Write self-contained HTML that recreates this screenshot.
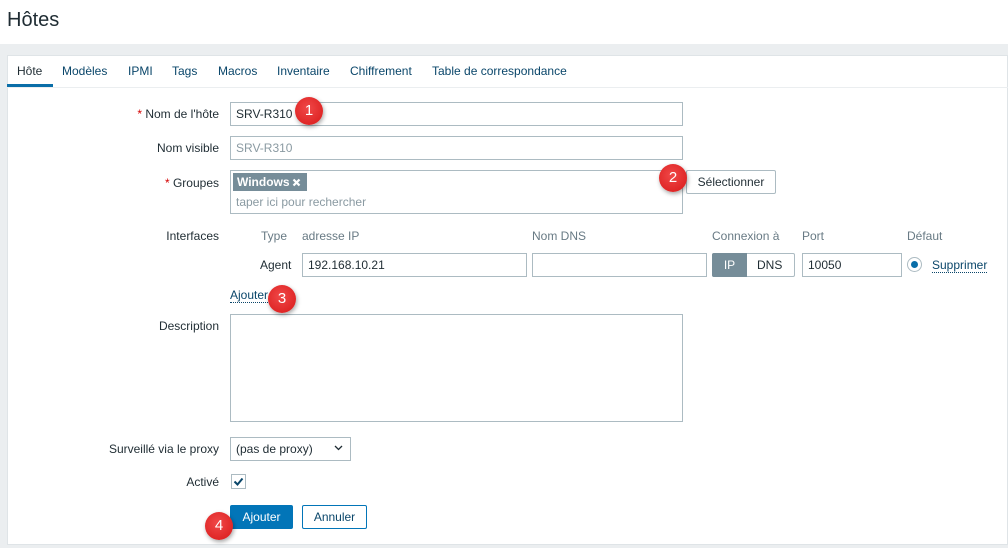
<!DOCTYPE html>
<html><head><meta charset="utf-8"><style>
*{box-sizing:border-box;margin:0;padding:0}
body{width:1008px;height:548px;overflow:hidden;background:#ebeef0;font-family:"Liberation Sans",Arial,sans-serif;font-size:12px;color:#1f2c33;position:relative}
.a{position:absolute;white-space:nowrap}
.top{left:0;top:0;width:1008px;height:44px;background:#fff}
h1{position:absolute;left:7px;top:9px;font-size:20px;font-weight:normal;color:#1f2c33}
.card{left:7px;top:55px;width:1001px;height:490px;background:#fff;border:1px solid #dfe4e7}
.tab{top:64px;color:#0a466a;font-size:12px}
.lbl{text-align:right;width:200px;left:19px}
.in{background:#fff;border:1px solid #acbbc2;height:24px;padding:4px 5px;line-height:14px}
.req{color:#d40000}
.hd{top:229px;color:#687a84}
.mk{width:28px;height:28px;border-radius:50%;background:radial-gradient(circle at 45% 40%,#f04848,#d81818);color:#fff;font-size:15px;text-align:center;line-height:28px;box-shadow:1px 2px 4px rgba(0,0,0,.35)}
.lnk{color:#0a466a;border-bottom:1px dotted #0a466a}
</style></head><body>
<div class="a top"></div>
<h1>Hôtes</h1>
<div class="a card"></div>
<div class="a tab" style="left:17px;color:#1f2c33">Hôte</div>
<div class="a" style="left:7px;top:84px;width:46px;height:3px;background:#0a6ea8"></div>
<div class="a" style="left:7px;top:87px;width:1001px;height:1px;background:#ebeef0"></div>
<div class="a tab" style="left:62px">Modèles</div>
<div class="a tab" style="left:128px">IPMI</div>
<div class="a tab" style="left:172px">Tags</div>
<div class="a tab" style="left:218px">Macros</div>
<div class="a tab" style="left:277px">Inventaire</div>
<div class="a tab" style="left:350px">Chiffrement</div>
<div class="a tab" style="left:432px">Table de correspondance</div>

<div class="a lbl" style="top:107px"><span class="req">*</span> Nom de l'hôte</div>
<div class="a in" style="left:230px;top:102px;width:453px">SRV-R310</div>
<div class="a lbl" style="top:141px">Nom visible</div>
<div class="a in" style="left:230px;top:136px;width:453px;color:#8a9aa2">SRV-R310</div>
<div class="a lbl" style="top:176px"><span class="req">*</span> Groupes</div>
<div class="a in" style="left:230px;top:170px;width:453px;height:44px"></div>
<div class="a" style="left:233px;top:173px;width:74px;height:18px;background:#768d99;color:#fff;font-weight:bold;padding:2px 4px;line-height:14px">Windows</div>
<svg class="a" style="left:292px;top:178px" width="9" height="9"><path d="M1.5 1.5L7.5 7.5M7.5 1.5L1.5 7.5" stroke="#fff" stroke-width="2.2"/></svg>
<div class="a" style="left:236px;top:195px;color:#8a9aa2">taper ici pour rechercher</div>
<div class="a" style="left:686px;top:170px;width:90px;height:24px;border:1px solid #acbbc2;border-radius:2px;background:#fff;text-align:center;line-height:22px">Sélectionner</div>

<div class="a lbl" style="top:229px">Interfaces</div>
<div class="a hd" style="left:261px">Type</div>
<div class="a hd" style="left:302px">adresse IP</div>
<div class="a hd" style="left:532px">Nom DNS</div>
<div class="a hd" style="left:712px">Connexion à</div>
<div class="a hd" style="left:802px">Port</div>
<div class="a hd" style="left:907px">Défaut</div>
<div class="a" style="left:260px;top:258px">Agent</div>
<div class="a in" style="left:302px;top:253px;width:225px">192.168.10.21</div>
<div class="a in" style="left:532px;top:253px;width:175px"></div>
<div class="a" style="left:712px;top:253px;width:83px;height:24px;border:1px solid #acbbc2;border-radius:2px"></div>
<div class="a" style="left:712px;top:253px;width:35px;height:24px;background:#768d99;color:#fff;text-align:center;line-height:24px;border-radius:2px 0 0 2px">IP</div>
<div class="a" style="left:757px;top:258px">DNS</div>
<div class="a in" style="left:802px;top:253px;width:100px">10050</div>
<div class="a" style="left:907px;top:257px;width:15px;height:15px;border:1px solid #acbbc2;border-radius:50%"></div>
<div class="a" style="left:911px;top:261px;width:7px;height:7px;background:#0a6ea8;border-radius:50%"></div>
<div class="a lnk" style="left:932px;top:258px">Supprimer</div>
<div class="a lnk" style="left:230px;top:288px">Ajouter</div>

<div class="a lbl" style="top:319px">Description</div>
<div class="a in" style="left:230px;top:314px;width:453px;height:108px"></div>
<div class="a lbl" style="top:442px">Surveillé via le proxy</div>
<div class="a in" style="left:230px;top:437px;width:121px">(pas de proxy)</div>
<svg class="a" style="left:334px;top:445px" width="9" height="6"><path d="M1 1L4.5 4.5L8 1" stroke="#1f2c33" stroke-width="1.3" fill="none"/></svg>
<div class="a lbl" style="top:475px">Activé</div>
<div class="a" style="left:231px;top:474px;width:15px;height:15px;border:1px solid #acbbc2;background:#fff"></div>
<svg class="a" style="left:233px;top:476px" width="11" height="11"><path d="M1.5 5.5L4.5 8.5L9.5 2.5" stroke="#0a466a" stroke-width="2" fill="none"/></svg>
<div class="a" style="left:230px;top:505px;width:63px;height:24px;background:#0275b8;border-radius:2px;color:#fff;text-align:center;line-height:24px">Ajouter</div>
<div class="a" style="left:302px;top:505px;width:65px;height:24px;border:1px solid #0275b8;border-radius:2px;color:#0a466a;text-align:center;line-height:22px;background:#fff">Annuler</div>

<div class="a mk" style="left:295px;top:97px">1</div>
<div class="a mk" style="left:659px;top:164px">2</div>
<div class="a mk" style="left:268px;top:285px">3</div>
<div class="a mk" style="left:205px;top:512px">4</div>
</body></html>
